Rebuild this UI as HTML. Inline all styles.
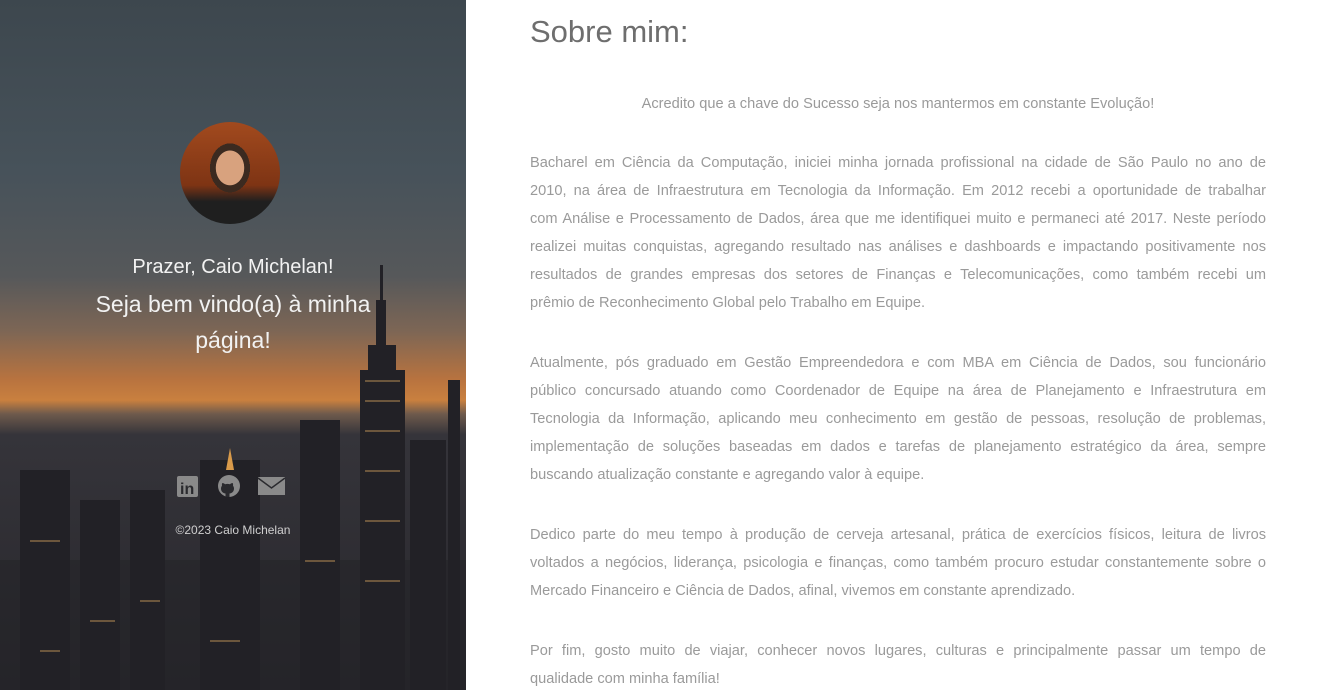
<!DOCTYPE html>
<html><head><meta charset="utf-8"><style>
*{margin:0;padding:0;box-sizing:border-box}
body{width:1339px;height:690px;overflow:hidden;background:#fff;font-family:"Liberation Sans",sans-serif;position:relative}
#left{position:absolute;left:0;top:0;width:466px;height:690px;overflow:hidden;
background:linear-gradient(180deg,#3d474e 0%,#47525a 25%,#56585a 40%,#7d6655 48%,#b8733f 55%,#c9803f 58%,#6e5a4c 60%,#35343a 63%,#28272c 100%)}
#left svg{position:absolute;left:0;top:0}
.avatar{position:absolute;left:180px;top:122px;width:100px;height:102px;border-radius:50%;
background:radial-gradient(ellipse 20% 24% at 50% 45%,#d8a27e 0 70%,#3b2a20 72% 100%,transparent 100%),linear-gradient(180deg,#a24a1e,#7e3414 62%,#1f1f1f 78%);overflow:hidden}
.ltext{position:absolute;left:0;width:466px;text-align:center;color:#f2f2f2}
#right{position:absolute;left:530px;top:1px;width:736px;color:#9a9a9a;font-size:14.6px}
h1{position:absolute;top:13px;left:0;font-weight:normal;font-size:31px;color:#6e6e6e}
.l{position:absolute;left:0;width:736px;white-space:nowrap;text-align:justify;text-align-last:justify;line-height:20px}
.e{text-align-last:left}
</style></head><body>
<div id="left">
<svg width="466" height="690">
<g fill="#222126">
<rect x="20" y="470" width="50" height="220"/><rect x="80" y="500" width="40" height="190"/>
<rect x="130" y="490" width="35" height="200"/><rect x="200" y="460" width="60" height="230"/>
<rect x="300" y="420" width="40" height="270"/><rect x="360" y="370" width="45" height="320"/>
<rect x="368" y="345" width="28" height="30"/><rect x="376" y="300" width="10" height="50"/>
<rect x="380" y="265" width="3" height="40"/><rect x="448" y="380" width="12" height="310"/>
<rect x="410" y="440" width="36" height="250"/><rect x="0" y="560" width="466" height="130" opacity=".5"/>
</g>
<g fill="#c89a5a" opacity=".45">
<rect x="365" y="380" width="35" height="2"/><rect x="365" y="400" width="35" height="2"/><rect x="365" y="430" width="35" height="2"/><rect x="365" y="470" width="35" height="2"/><rect x="365" y="520" width="35" height="2"/><rect x="365" y="580" width="35" height="2"/>
<rect x="30" y="540" width="30" height="2"/><rect x="140" y="600" width="20" height="2"/><rect x="305" y="560" width="30" height="2"/><rect x="90" y="620" width="25" height="2"/><rect x="40" y="650" width="20" height="2"/><rect x="210" y="640" width="30" height="2"/>
</g>
<path d="M226 470 L230 448 L234 470Z" fill="#d89a4a"/>
</svg>
<div class="avatar"></div>
<div class="ltext" style="top:256px;font-size:20px">Prazer, Caio Michelan!</div>
<div class="ltext" style="top:286px;font-size:23px;line-height:36px;padding:0 90px">Seja bem vindo(a) à minha página!</div>
<svg width="466" height="60" style="top:470px" viewBox="0 470 466 60">
<rect x="177" y="476" width="21" height="21" rx="2" fill="#8a8a8a"/>
<text x="180" y="494" font-family="Liberation Sans" font-weight="bold" font-size="16" fill="#2a2a2e">in</text>
<circle cx="229" cy="486" r="11" fill="#8a8a8a"/>
<path d="M225.5 497v-3.5c-2.5-.3-4.5-2-4.5-5 0-1 .4-2 1-2.7-.2-.8-.1-1.8.3-2.8 1 0 2 .6 2.8 1.2a8 8 0 0 1 4.8 0c.8-.6 1.8-1.2 2.8-1.2.4 1 .5 2 .3 2.8.6.7 1 1.7 1 2.7 0 3-2 4.7-4.5 5v3.5z" fill="#2a2a2e"/>
<rect x="258" y="477" width="27" height="18" fill="#8a8a8a"/>
<path d="M258 478 L271.5 488 L285 478" stroke="#2a2a2e" stroke-width="1.5" fill="none"/>
</svg>
<div class="ltext" style="top:523px;font-size:12px;color:#cfcfcf">©2023 Caio Michelan</div>
</div>
<div id="right">
<h1>Sobre mim:</h1>
<div class="l e" style="top:93px;text-align:center;text-align-last:center;width:736px">Acredito que a chave do Sucesso seja nos mantermos em constante Evolução!</div>
<div class="l" style="top:152px">Bacharel em Ciência da Computação, iniciei minha jornada profissional na cidade de São Paulo no ano de</div>
<div class="l" style="top:180px">2010, na área de Infraestrutura em Tecnologia da Informação. Em 2012 recebi a oportunidade de trabalhar</div>
<div class="l" style="top:208px">com Análise e Processamento de Dados, área que me identifiquei muito e permaneci até 2017. Neste período</div>
<div class="l" style="top:236px">realizei muitas conquistas, agregando resultado nas análises e dashboards e impactando positivamente nos</div>
<div class="l" style="top:264px">resultados de grandes empresas dos setores de Finanças e Telecomunicações, como também recebi um</div>
<div class="l e" style="top:292px">prêmio de Reconhecimento Global pelo Trabalho em Equipe.</div>
<div class="l" style="top:352px">Atualmente, pós graduado em Gestão Empreendedora e com MBA em Ciência de Dados, sou funcionário</div>
<div class="l" style="top:380px">público concursado atuando como Coordenador de Equipe na área de Planejamento e Infraestrutura em</div>
<div class="l" style="top:408px">Tecnologia da Informação, aplicando meu conhecimento em gestão de pessoas, resolução de problemas,</div>
<div class="l" style="top:436px">implementação de soluções baseadas em dados e tarefas de planejamento estratégico da área, sempre</div>
<div class="l e" style="top:464px">buscando atualização constante e agregando valor à equipe.</div>
<div class="l" style="top:524px">Dedico parte do meu tempo à produção de cerveja artesanal, prática de exercícios físicos, leitura de livros</div>
<div class="l" style="top:552px">voltados a negócios, liderança, psicologia e finanças, como também procuro estudar constantemente sobre o</div>
<div class="l e" style="top:580px">Mercado Financeiro e Ciência de Dados, afinal, vivemos em constante aprendizado.</div>
<div class="l" style="top:640px">Por fim, gosto muito de viajar, conhecer novos lugares, culturas e principalmente passar um tempo de</div>
<div class="l e" style="top:668px">qualidade com minha família!</div>
</div>
</body></html>
